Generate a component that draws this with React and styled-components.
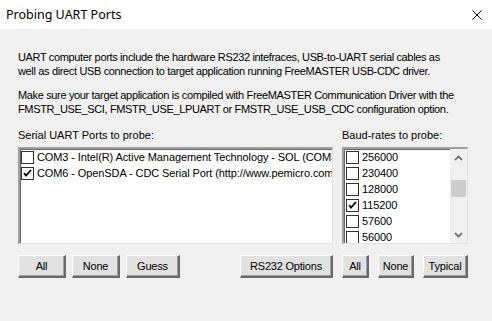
import React from "react";
import styled, { createGlobalStyle } from "styled-components";

const Global = createGlobalStyle`
  html, body { margin: 0; padding: 0; background: #f0f0f0; }
  body { font-family: "Liberation Sans", Arial, sans-serif; font-size: 11px; color: #000; }
`;

const Window = styled.div`
  width: 492px;
  height: 321px;
  display: flex;
  flex-direction: column;
  background: #f0f0f0;
  overflow: hidden;
`;

const TitleBar = styled.div`
  height: 29px;
  background: #fff;
  display: flex;
  align-items: center;
  justify-content: space-between;
  padding: 0 10px 0 6px;
  flex-shrink: 0;
`;

const Title = styled.span`
  font-family: "Noto Sans", "Open Sans", sans-serif;
  font-size: 12.5px;
  color: #000;
  margin-top: -1px;
`;

const CloseBtn = styled.svg`
  width: 10px;
  height: 10px;
  display: block;
`;

const Body = styled.div`
  display: flex;
  flex-direction: column;
  padding: 21px 24px 0 18px;
`;

const Para = styled.p`
  margin: 0 0 ${(p) => p.$mb || 0}px 0;
  line-height: 14px;
  white-space: nowrap;
  letter-spacing: ${(p) => p.$ls || "0px"};
`;

const Columns = styled.div`
  display: flex;
  gap: 9px;
  margin-top: 12px;
`;

const Column = styled.div`
  display: flex;
  flex-direction: column;
  width: ${(p) => p.$w}px;
`;

const Label = styled.div`
  line-height: 14px;
  height: 14px;
  margin-bottom: 5px;
  white-space: nowrap;
`;

const ListBox = styled.div`
  height: 97px;
  box-sizing: border-box;
  background: #fff;
  border-style: solid;
  border-width: 2px 1px 1px 2px;
  border-color: #a0a0a0 #e3e3e3 #e3e3e3 #a0a0a0;
  box-shadow: inset 1px 1px 0 #696969;
  display: flex;
  overflow: hidden;
`;

const Items = styled.div`
  flex: 1;
  min-width: 0;
  display: flex;
  flex-direction: column;
  overflow: hidden;
  padding: ${(p) => p.$pad || "0 0 0 1px"};
`;

const Item = styled.div`
  height: 16px;
  display: flex;
  align-items: center;
  gap: 3px;
  white-space: nowrap;
  flex-shrink: 0;
  letter-spacing: -0.1px;
`;

const Box = styled.span`
  width: 13px;
  height: 13px;
  box-sizing: border-box;
  border: 1px solid #333;
  background: #fff;
  display: flex;
  align-items: center;
  justify-content: center;
  flex-shrink: 0;
`;

const Scrollbar = styled.div`
  width: 17px;
  background: #f0f0f0;
  display: flex;
  flex-direction: column;
  align-items: center;
  flex-shrink: 0;
`;

const Arrow = styled.div`
  height: 17px;
  width: 17px;
  display: flex;
  align-items: center;
  justify-content: center;
`;

const Track = styled.div`
  flex: 1;
  width: 100%;
  display: flex;
  flex-direction: column;
  padding-top: 14px;
  box-sizing: border-box;
`;

const Thumb = styled.div`
  margin: 0 1px;
  height: 17px;
  background: #cdcdcd;
`;

const ButtonRow = styled.div`
  display: flex;
  gap: ${(p) => p.$gap}px;
  margin-top: 11px;
`;

const Spacer = styled.div`
  flex: 1;
`;

const Button = styled.button`
  width: ${(p) => p.$w}px;
  height: 23px;
  box-sizing: border-box;
  padding: 0;
  font-family: "Liberation Sans", Arial, sans-serif;
  font-size: 11px;
  color: #000;
  background: #e1e1e1;
  border-style: solid;
  border-width: 1px 2px 2px 1px;
  border-color: #fff #696969 #696969 #fff;
  box-shadow: inset -1px -1px 0 #a0a0a0, inset 1px 1px 0 #e3e3e3;
  text-align: center;
  white-space: nowrap;
  letter-spacing: -0.2px;
`;

const Check = () => (
  <svg width="9" height="9" viewBox="0 0 9 9">
    <path d="M1 4 L3 6.5 L8 1" fill="none" stroke="#000" strokeWidth="1.8" />
  </svg>
);

const CheckItem = ({ checked, children }) => (
  <Item>
    <Box>{checked && <Check />}</Box>
    <span>{children}</span>
  </Item>
);

const ports = [
  { t: "COM3 - Intel(R) Active Management Technology - SOL (COM3)", c: false },
  { t: "COM6 - OpenSDA - CDC Serial Port (http://www.pemicro.com/opensda) (COM6)", c: true },
];

const bauds = [
  { t: "256000", c: false },
  { t: "230400", c: false },
  { t: "128000", c: false },
  { t: "115200", c: true },
  { t: "57600", c: false },
  { t: "56000", c: false },
];

export default function App() {
  return (
    <>
      <Global />
      <Window>
        <TitleBar>
          <Title>Probing UART Ports</Title>
          <CloseBtn viewBox="0 0 10 10">
            <path d="M0.5 0.5 L9.5 9.5 M9.5 0.5 L0.5 9.5" stroke="#000" strokeWidth="1" />
          </CloseBtn>
        </TitleBar>
        <Body>
          <Para $mb={10} $ls="-0.35px">
            UART computer ports include the hardware RS232 intefraces, USB-to-UART serial cables as
            <br />
            well as direct USB connection to target application running FreeMASTER USB-CDC driver.
          </Para>
          <Para $ls="-0.35px">
            Make sure your target application is compiled with FreeMASTER Communication Driver with the
            <br />
            FMSTR_USE_SCI, FMSTR_USE_LPUART or FMSTR_USE_USB_CDC configuration option.
          </Para>
          <Columns>
            <Column $w={315}>
              <Label>Serial UART Ports to probe:</Label>
              <ListBox>
                <Items>
                  {ports.map((p) => (
                    <CheckItem key={p.t} checked={p.c}>
                      {p.t}
                    </CheckItem>
                  ))}
                </Items>
              </ListBox>
              <ButtonRow $gap={6}>
                <Button $w={48}>All</Button>
                <Button $w={48}>None</Button>
                <Button $w={54}>Guess</Button>
                <Spacer />
                <Button $w={93}>RS232 Options</Button>
              </ButtonRow>
            </Column>
            <Column $w={126}>
              <Label>Baud-rates to probe:</Label>
              <ListBox>
                <Items $pad="0 0 0 2px">
                  {bauds.map((b) => (
                    <CheckItem key={b.t} checked={b.c}>
                      {b.t}
                    </CheckItem>
                  ))}
                </Items>
                <Scrollbar>
                  <Arrow>
                    <svg width="9" height="6" viewBox="0 0 9 6">
                      <path d="M1 5 L4.5 1.5 L8 5" fill="none" stroke="#606060" strokeWidth="1.6" />
                    </svg>
                  </Arrow>
                  <Track>
                    <Thumb />
                  </Track>
                  <Arrow>
                    <svg width="9" height="6" viewBox="0 0 9 6">
                      <path d="M1 1 L4.5 4.5 L8 1" fill="none" stroke="#606060" strokeWidth="1.6" />
                    </svg>
                  </Arrow>
                </Scrollbar>
              </ListBox>
              <ButtonRow $gap={9}>
                <Button $w={27}>All</Button>
                <Button $w={36}>None</Button>
                <Button $w={45}>Typical</Button>
              </ButtonRow>
            </Column>
          </Columns>
        </Body>
      </Window>
    </>
  );
}
